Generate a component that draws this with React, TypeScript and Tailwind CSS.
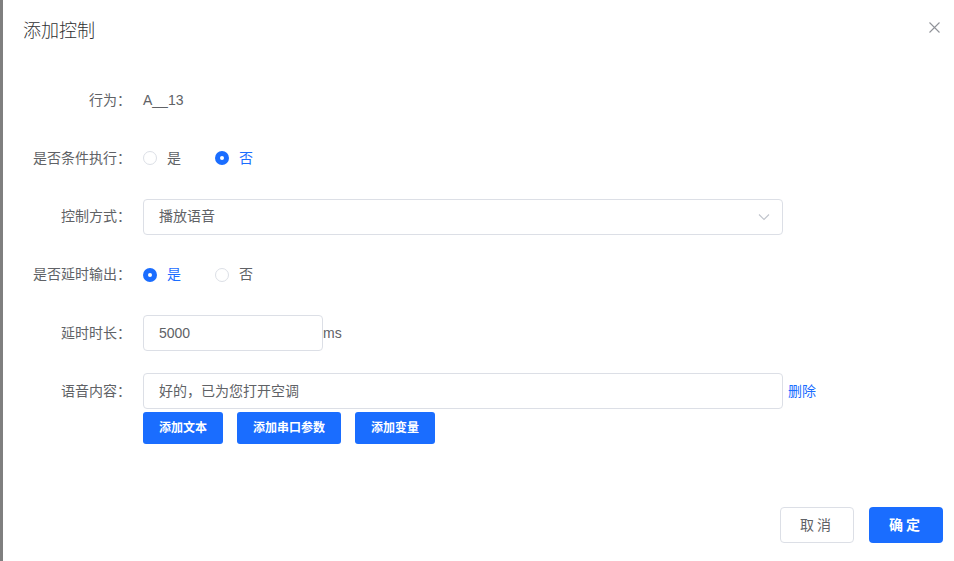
import { useState } from 'react';

const font = { fontFamily: '"Liberation Sans", "Noto Sans CJK SC", sans-serif' };

function Radio({ checked, label, onClick }: { checked: boolean; label: string; onClick: () => void }) {
  return (
    <label onClick={onClick} className="flex items-center cursor-pointer mr-[34px]">
      {checked ? (
        <span className="w-[14px] h-[14px] rounded-full bg-[#1a6dff] flex items-center justify-center">
          <span className="w-[4px] h-[4px] rounded-full bg-white" />
        </span>
      ) : (
        <span className="w-[14px] h-[14px] rounded-full border border-[#dcdfe6] bg-white" />
      )}
      <span className={`ml-[10px] text-[14px] ${checked ? 'text-[#1a6dff]' : 'text-[#606266]'}`}>{label}</span>
    </label>
  );
}

function Row({ label, children }: { label: string; children: React.ReactNode }) {
  return (
    <div className="flex items-start mb-[22.3px]">
      <div className="w-[140px] shrink-0 h-9 flex items-center justify-end pr-[12px] text-[14px] text-[#606266]">
        {label}
      </div>
      <div className="flex-1">{children}</div>
    </div>
  );
}

export default function App() {
  const [cond, setCond] = useState(false);
  const [delay, setDelay] = useState(true);

  return (
    <div className="w-full h-[561px] flex bg-white" style={font}>
      <div className="w-[3px] bg-[#7f7f7f] shrink-0" />
      <div className="flex-1 relative flex flex-col">
        <div className="pt-[19px] pl-[20px] h-[82px]">
          <span className="text-[18px] leading-6 text-[#303133] font-light">添加控制</span>
        </div>
        <button className="absolute right-[14px] top-[21px] w-[12px] h-[12px] flex items-center justify-center">
          <svg width="11" height="11" viewBox="0 0 11 11" stroke="#909399" strokeWidth="1.1">
            <path d="M0.5 0.5L10.5 10.5M10.5 0.5L0.5 10.5" />
          </svg>
        </button>

        <div>
          <Row label="行为：">
            <div className="h-9 flex items-center text-[14px] text-[#606266]">A__13</div>
          </Row>
          <Row label="是否条件执行：">
            <div className="h-9 flex items-center">
              <Radio checked={cond} label="是" onClick={() => setCond(true)} />
              <Radio checked={!cond} label="否" onClick={() => setCond(false)} />
            </div>
          </Row>
          <Row label="控制方式：">
            <div className="w-[640px] h-9 border border-[#dcdfe6] rounded-[4px] flex items-center justify-between pl-[15px] pr-[12px] text-[14px] text-[#606266]">
              <span>播放语音</span>
              <svg width="12" height="8" viewBox="0 0 12 8" fill="none" stroke="#c0c4cc" strokeWidth="1.1">
                <path d="M1 1.5L6 6.5L11 1.5" />
              </svg>
            </div>
          </Row>
          <Row label="是否延时输出：">
            <div className="h-9 flex items-center">
              <Radio checked={delay} label="是" onClick={() => setDelay(true)} />
              <Radio checked={!delay} label="否" onClick={() => setDelay(false)} />
            </div>
          </Row>
          <Row label="延时时长：">
            <div className="flex items-center">
              <div className="w-[180px] h-9 border border-[#dcdfe6] rounded-[4px] flex items-center pl-[15px] text-[14px] text-[#606266]">
                5000
              </div>
              <span className="text-[14px] text-[#606266]">ms</span>
            </div>
          </Row>
          <Row label="语音内容：">
            <div className="flex items-center">
              <div className="w-[640px] h-9 border border-[#dcdfe6] rounded-[4px] flex items-center pl-[15px] text-[14px] text-[#606266]">
                好的，已为您打开空调
              </div>
              <span className="ml-[5px] text-[14px] text-[#1a6dff] cursor-pointer">删除</span>
            </div>
            <div className="flex gap-[14px] mt-[3px]">
              <button className="w-[80px] h-8 rounded-[3px] bg-[#1a6dff] text-white text-[12px] font-semibold">添加文本</button>
              <button className="w-[104px] h-8 rounded-[3px] bg-[#1a6dff] text-white text-[12px] font-semibold">添加串口参数</button>
              <button className="w-[80px] h-8 rounded-[3px] bg-[#1a6dff] text-white text-[12px] font-semibold">添加变量</button>
            </div>
          </Row>
        </div>

        <div className="absolute right-[11px] top-[507px] flex gap-[15px]">
          <button className="w-[74px] h-9 rounded-[4px] border border-[#dcdfe6] bg-white text-[14px] text-[#606266] tracking-[3px]">取消</button>
          <button className="w-[74px] h-9 rounded-[4px] bg-[#1a6dff] text-white text-[14px] font-bold tracking-[3px]">确定</button>
        </div>
      </div>
    </div>
  );
}
